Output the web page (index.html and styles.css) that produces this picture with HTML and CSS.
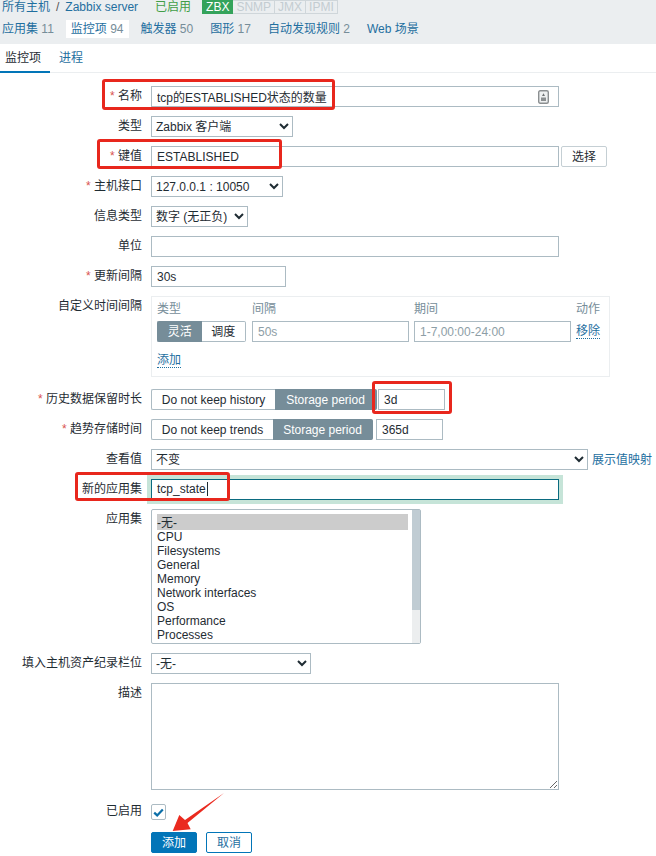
FILE: index.html
```html
<!DOCTYPE html>
<html lang="zh-CN">
<head>
    <meta charset="UTF-8">
    <title>监控项</title>
    <link rel="stylesheet" href="styles.css">
</head>
<body>
    <!-- 顶部导航 -->
    <header class="top">
        <div class="crumbs">
            <a class="link dark">所有主机</a><span class="sep">/</span><a class="link">Zabbix server</a>
            <span class="enabled">已启用</span>
            <span class="tags"><b class="tag on">ZBX</b><b class="tag">SNMP</b><b class="tag">JMX</b><b class="tag">IPMI</b></span>
        </div>
        <nav class="host-nav">
            <a class="link">应用集 <i>11</i></a>
            <a class="link current">监控项 <i>94</i></a>
            <a class="link">触发器 <i>50</i></a>
            <a class="link">图形 <i>17</i></a>
            <a class="link">自动发现规则 <i>2</i></a>
            <a class="link">Web 场景</a>
        </nav>
    </header>

    <div class="tabs">
        <span class="tab active">监控项</span>
        <a class="tab link">进程</a>
    </div>

    <!-- 表单 -->
    <form class="form" onsubmit="return false">
        <label class="lbl"><em>*</em> 名称</label>
        <div class="name-field">
            <input class="inp wide" type="text" value="tcp的ESTABLISHED状态的数量">
            <svg class="name-icon" width="11" height="14" viewBox="0 0 11 14">
                <rect x="0.7" y="0.7" width="9.6" height="12.6" rx="1.5" fill="#eef0f1" stroke="#8b8f91" stroke-width="1.4"/>
                <path d="M5.5 3.2 7 6H4z" fill="#6f7375"/>
                <rect x="3" y="7.5" width="5" height="3.5" fill="#8b8f91"/>
            </svg>
        </div>

        <label class="lbl">类型</label>
        <div><select class="sel sel-type"><option>Zabbix 客户端</option></select></div>

        <label class="lbl"><em>*</em> 键值</label>
        <div class="line">
            <input class="inp wide" type="text" value="ESTABLISHED">
            <button class="btn-plain" type="button">选择</button>
        </div>

        <label class="lbl"><em>*</em> 主机接口</label>
        <div><select class="sel sel-iface"><option>127.0.0.1 : 10050</option></select></div>

        <label class="lbl">信息类型</label>
        <div><select class="sel sel-info"><option>数字 (无正负)</option></select></div>

        <label class="lbl">单位</label>
        <div><input class="inp wide" type="text"></div>

        <label class="lbl"><em>*</em> 更新间隔</label>
        <div><input class="inp w135" type="text" value="30s"></div>

        <label class="lbl">自定义时间间隔</label>
        <div class="intervals">
            <div class="iv-grid">
                <span class="iv-head">类型</span>
                <span class="iv-head">间隔</span>
                <span class="iv-head">期间</span>
                <span class="iv-head">动作</span>
                <div class="seg seg-mode">
                    <span class="seg-item seg-on">灵活</span><span class="seg-item">调度</span>
                </div>
                <input class="inp muted" type="text" placeholder="50s">
                <input class="inp muted" type="text" placeholder="1-7,00:00-24:00">
                <a class="link dotted">移除</a>
            </div>
            <a class="link dotted add">添加</a>
        </div>

        <label class="lbl"><em>*</em> 历史数据保留时长</label>
        <div class="line line-history">
            <div class="seg">
                <span class="seg-item s-history">Do not keep history</span><span class="seg-item seg-on s-period">Storage period</span>
            </div>
            <input class="inp w67" type="text" value="3d">
        </div>

        <label class="lbl"><em>*</em> 趋势存储时间</label>
        <div class="line line-trends">
            <div class="seg">
                <span class="seg-item s-trends">Do not keep trends</span><span class="seg-item seg-on s-period">Storage period</span>
            </div>
            <input class="inp w67" type="text" value="365d">
        </div>

        <label class="lbl">查看值</label>
        <div class="line">
            <select class="sel sel-view"><option>不变</option></select>
            <a class="link map-link">展示值映射</a>
        </div>

        <label class="lbl">新的应用集</label>
        <div class="new-app"><span class="typed">tcp_state</span></div>

        <label class="lbl">应用集</label>
        <div class="listbox">
            <ul class="list">
                <li class="picked">-无-</li>
                <li>CPU</li>
                <li>Filesystems</li>
                <li>General</li>
                <li>Memory</li>
                <li>Network interfaces</li>
                <li>OS</li>
                <li>Performance</li>
                <li>Processes</li>
            </ul>
            <div class="scroll"><div class="thumb"></div></div>
        </div>

        <label class="lbl">填入主机资产纪录栏位</label>
        <div><select class="sel sel-inv"><option>-无-</option></select></div>

        <label class="lbl">描述</label>
        <div><textarea class="desc"></textarea></div>

        <label class="lbl lbl-check">已启用</label>
        <div class="check-row">
            <span class="check">
                <svg width="11" height="9" viewBox="0 0 11 9"><path d="M1.2 4.6 4.2 7.4 9.8 1.4" fill="none" stroke="#0a6ea8" stroke-width="2.2"/></svg>
            </span>
        </div>

        <div></div>
        <div class="actions">
            <button class="btn-main" type="button">添加</button>
            <button class="btn-line" type="button">取消</button>
        </div>
    </form>

    <!-- 截图上的红色标注 -->
    <div class="mark m-name"></div>
    <div class="mark m-key"></div>
    <div class="mark m-hist"></div>
    <div class="mark m-app"></div>
    <svg class="arrow" width="60" height="45" viewBox="0 0 60 45">
        <path d="M54 1 17.5 31 20.7 37.3 2.7 39 9.3 23 15 28z" fill="#ea2a1f"/>
    </svg>
</body>
</html>
```

FILE: styles.css
```css
* {
    box-sizing: border-box;
}
html, body {
    margin: 0;
    height: 856px;
    overflow: hidden;
}
body {
    position: relative;
    background: #fff;
    color: #1f2c33;
    font: 12px/14px "Liberation Sans", "Noto Sans CJK SC", sans-serif;
}
.link {
    color: #1f6f9f;
}
i {
    font-style: normal;
    color: #768d99;
}

/* 顶部 */
.top {
    height: 44px;
    background: #ebeef0;
    padding-left: 2px;
}
.crumbs {
    display: flex;
    align-items: center;
    height: 14px;
}
.sep {
    margin: 0 6px;
    color: #555;
}
.enabled {
    margin-left: 17px;
    color: #429e47;
}
.tags {
    display: flex;
    margin-left: 11px;
}
.tag {
    padding: 0 3px;
    height: 14px;
    border: 1px solid #cfd6da;
    border-left: 0;
    font-weight: normal;
    color: #c3ccd1;
    line-height: 13px;
}
.tag.on {
    background: #34a35b;
    border-color: #34a35b;
    color: #fff;
    padding: 0 3px 0 4px;
}
.host-nav {
    display: flex;
    align-items: center;
    margin-top: 6px;
    height: 18px;
}
.host-nav a {
    margin-right: 17px;
    white-space: nowrap;
}
.host-nav a.current {
    margin: 0 12px 0 -5px;
    padding: 2px 5px;
    height: 18px;
    background: #fff;
    color: #1f6f9f;
}

/* 标签页 */
.tabs {
    display: flex;
    height: 29px;
    border-bottom: 1px solid #ebeef0;
}
.tab {
    padding: 7px 5px 0;
    width: 50px;
    text-align: left;
    color: #1f2c33;
}
.tab.link {
    color: #1f6f9f;
    padding-left: 9px;
}
.tab.active {
    border-bottom: 2px solid #0275b8;
    height: 29px;
}

/* 表单 */
.form {
    display: grid;
    grid-template-columns: 142px 1fr;
    column-gap: 9px;
    row-gap: 9px;
    padding-top: 13px;
}
.lbl {
    text-align: right;
    line-height: 20px;
    white-space: nowrap;
}
.lbl em {
    color: #d9534f;
    font-style: normal;
}
.inp {
    display: block;
    height: 21px;
    padding: 0 5px;
    border: 1px solid #acbbc3;
    border-radius: 0;
    background: #fff;
    color: #1f2c33;
    font: 12px "Liberation Sans", "Noto Sans CJK SC", sans-serif;
    outline: none;
}
.inp::placeholder {
    color: #8d9ea6;
}
.wide {
    width: 408px;
}
.w135 {
    width: 135px;
}
.w67 {
    width: 67px;
}
.name-field {
    position: relative;
    width: 408px;
}
.name-icon {
    position: absolute;
    top: 4px;
    right: 10px;
}
.line {
    display: flex;
    align-items: center;
}
.sel {
    display: block;
    height: 21px;
    padding: 0;
    border: 1px solid #acbbc3;
    border-radius: 0;
    background: #fff;
    color: #1f2c33;
    font: 12px "Liberation Sans", "Noto Sans CJK SC", sans-serif;
    outline: none;
}
.sel-type { width: 142px; }
.sel-iface { width: 132px; }
.sel-info { width: 97px; }
.sel-view { width: 437px; }
.sel-inv { width: 160px; }
.btn-plain {
    margin-left: 2px;
    width: 46px;
    height: 21px;
    padding: 0;
    border: 1px solid #c5cfd4;
    border-radius: 2px;
    background: #fff;
    color: #1f2c33;
    font: inherit;
}
.map-link {
    margin-left: 4px;
    white-space: nowrap;
}

/* 自定义时间间隔 */
.intervals {
    width: 459px;
    height: 81px;
    margin-bottom: 3px;
    padding: 5px 5px 0;
    border: 1px solid #ebeef0;
}
.iv-grid {
    display: grid;
    grid-template-columns: 95px 162px 162px auto;
    row-gap: 5px;
}
.iv-head {
    color: #768d99;
}
.iv-grid .muted {
    width: 157px;
}
.seg-mode {
    width: 89px;
}
.dotted {
    align-self: center;
    justify-self: start;
    border-bottom: 1px dotted #1f6f9f;
}
.add {
    display: inline-block;
    margin-top: 11px;
    line-height: 14px;
}
.seg {
    display: flex;
    height: 21px;
}
.seg-item {
    height: 21px;
    border: 1px solid #acbbc3;
    background: #fff;
    text-align: center;
    line-height: 20px;
    white-space: nowrap;
    flex: 1;
}
.seg-item:first-child {
    border-radius: 2px 0 0 2px;
    border-right: 0;
}
.seg-item:last-child {
    border-radius: 0 2px 2px 0;
    border-left: 0;
}
.seg-on {
    background: #768d99;
    border-color: #768d99;
    color: #fff;
}
.s-history { flex: none; width: 124px; }
.s-trends { flex: none; width: 122px; }
.s-period { flex: none; width: 102px; }
.line-trends .s-period { width: 100px; }
.line-history .inp { margin-left: 1px; }
.line-trends .inp { margin-left: 3px; }

/* 新的应用集 */
.new-app {
    width: 408px;
    height: 21px;
    padding: 0 5px;
    border: 1px solid #0b6b80;
    box-shadow: 0 0 0 4px #c6e4d8;
    line-height: 19px;
}
.typed {
    padding-right: 1px;
    border-right: 1px solid #1f2c33;
}

/* 应用集列表 */
.listbox {
    display: flex;
    width: 270px;
    height: 135px;
    border: 1px solid #acbbc3;
    border-radius: 2px;
}
.list {
    flex: 1;
    margin: 0;
    padding: 4px 4px 0 5px;
    list-style: none;
}
.list li {
    height: 14px;
}
.list .picked {
    height: 16px;
    background: #cccccc;
    line-height: 18px;
}
.scroll {
    width: 8px;
    background: #eceeef;
}
.thumb {
    height: 100px;
    background: #c0ccd3;
}

.desc {
    display: block;
    width: 408px;
    height: 107px;
    border: 1px solid #acbbc3;
    border-radius: 0;
    resize: both;
    outline: none;
}

/* 底部 */
.lbl-check {
    margin: 2px 0;
}
.check-row {
    height: 16px;
    margin-top: 5px;
}
.check {
    display: flex;
    align-items: center;
    justify-content: center;
    width: 15px;
    height: 16px;
    border: 1px solid #acbbc3;
    border-radius: 2px;
}
.actions {
    display: flex;
    gap: 9px;
}
.btn-main, .btn-line {
    width: 46px;
    height: 21px;
    padding: 0;
    border: 1px solid #0275b8;
    border-radius: 2px;
    font: inherit;
}
.btn-main {
    background: #0275b8;
    color: #fff;
}
.btn-line {
    background: #fff;
    color: #1f6f9f;
}

/* 红色标注 */
.mark {
    position: absolute;
    border: 3px solid #e8271d;
    border-radius: 3px;
}
.m-name { left: 102px; top: 79px; width: 233px; height: 31px; }
.m-key { left: 97px; top: 139px; width: 185px; height: 30px; }
.m-hist { left: 372px; top: 381px; width: 80px; height: 33px; }
.m-app { left: 75px; top: 472px; width: 155px; height: 29px; }
.arrow {
    position: absolute;
    left: 170px;
    top: 792px;
}
```
